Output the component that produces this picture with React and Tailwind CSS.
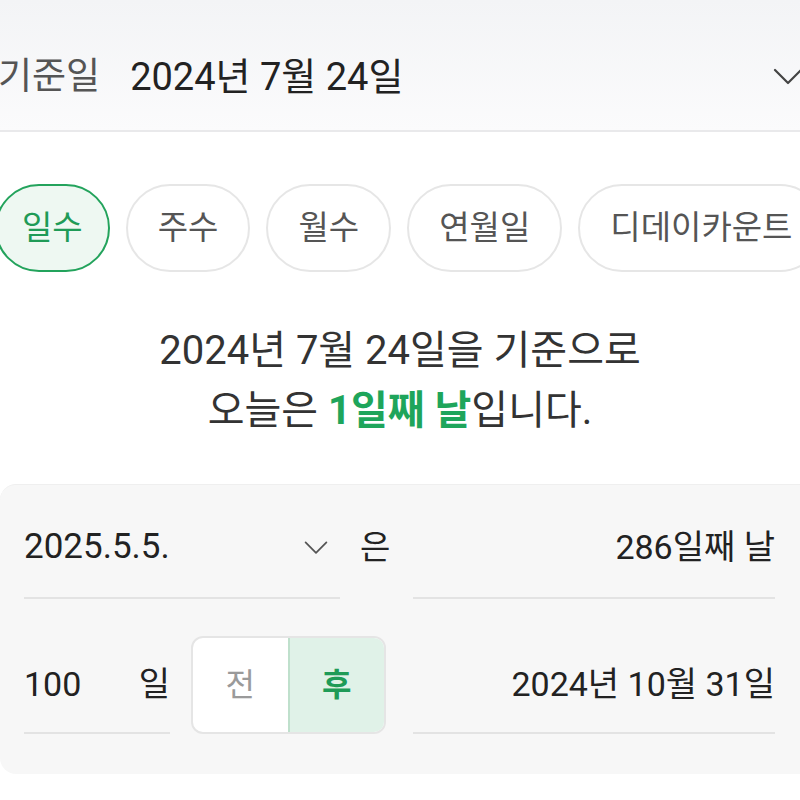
import React, { useState } from 'react';

const FONT = { fontFamily: 'Roboto, "Noto Sans CJK KR", "Noto Sans", sans-serif' };

function Chevron({ className }) {
  return (
    <svg className={className} viewBox="0 0 32 20" fill="none" stroke="currentColor" strokeWidth="2.2" strokeLinecap="round" strokeLinejoin="round">
      <path d="M3 3 L16 16 L29 3" />
    </svg>
  );
}

const TABS = ['일수', '주수', '월수', '연월일', '디데이카운트'];

function App() {
  const [tab, setTab] = useState(0);
  const [after, setAfter] = useState(true);

  return (
    <div className="h-[800px] w-[800px] overflow-hidden bg-white text-[#222]" style={FONT}>
      {/* 기준일 header */}
      <div className="flex h-[132px] items-center border-b-2 border-[#e9e9eb] bg-gradient-to-b from-[#f3f4f6] to-[#fbfbfc] pt-[24px]">
        <span className="-ml-[2px] text-[37px] text-[#555]">기준일</span>
        <span className="ml-[30px] text-[38px] text-[#222]">2024년 7월 24일</span>
        <Chevron className="ml-auto -mr-[6px] h-[20px] w-[36px] text-[#444]" />
      </div>

      {/* tabs */}
      <div className="-ml-[5px] mt-[52px] flex gap-4 whitespace-nowrap">
        {TABS.map((t, i) => (
          <button
            key={t}
            onClick={() => setTab(i)}
            className={
              i === tab
                ? 'h-[88px] shrink-0 rounded-full border-2 border-[#23a35c] bg-[#eef8f2] px-[25px] text-[33px] text-[#1f9b57]'
                : 'h-[88px] shrink-0 rounded-full border-2 border-[#e6e6e6] bg-white px-[30px] text-[33px] text-[#555]'
            }
          >
            {t}
          </button>
        ))}
      </div>

      {/* summary */}
      <div className="mt-[49px] text-center text-[40px] leading-[60px] text-[#333]">
        <div>2024년 7월 24일을 기준으로</div>
        <div>
          오늘은 <span className="font-bold text-[#1ea55b]">1일째 날</span>입니다.
        </div>
      </div>

      {/* calculator card */}
      <div className="mt-[43px] w-[820px] rounded-[16px] border-t border-[#efefef] bg-[#f7f7f7] pb-[40px] pl-[24px] pt-[16px]">
        <div className="flex items-end">
          <div className="flex h-[98px] w-[316px] items-center border-b-2 border-[#e3e3e3] pb-[4px]">
            <span className="text-[35px]">2025.5.5.</span>
            <Chevron className="ml-auto mr-[10px] mt-[2px] h-[16px] w-[28px] text-[#555]" />
          </div>
          <div className="flex h-[98px] w-[73px] items-center pb-[4px] pl-[20px] text-[33px]">은</div>
          <div className="flex h-[98px] w-[362px] items-center justify-end border-b-2 border-[#e3e3e3] pb-[4px] text-[34px]">
            286일째 날
          </div>
        </div>

        <div className="mt-[37px] flex items-end">
          <div className="flex h-[98px] w-[146px] items-center border-b-2 border-[#e3e3e3] text-[34px]">
            <span>100</span>
            <span className="ml-auto">일</span>
          </div>
          <div className="ml-[21px] mr-[27px] flex h-[98px] w-[195px] overflow-hidden rounded-[12px] border-2 border-[#e5e5e5] bg-white text-[32px]">
            <button
              onClick={() => setAfter(false)}
              className={after ? 'flex-1 text-[#9a9a9a]' : 'flex-1 bg-[#e0f2e8] font-bold text-[#1f9b57]'}
            >
              전
            </button>
            <button
              onClick={() => setAfter(true)}
              className={after ? 'flex-1 border-l-2 border-[#bfe0cc] bg-[#e0f2e8] font-bold text-[#1f9b57]' : 'flex-1 border-l-2 border-[#e5e5e5] text-[#9a9a9a]'}
            >
              후
            </button>
          </div>
          <div className="flex h-[98px] w-[362px] items-center justify-end border-b-2 border-[#e3e3e3] text-[34px]">
            2024년 10월 31일
          </div>
        </div>
      </div>
    </div>
  );
}

export default App;
